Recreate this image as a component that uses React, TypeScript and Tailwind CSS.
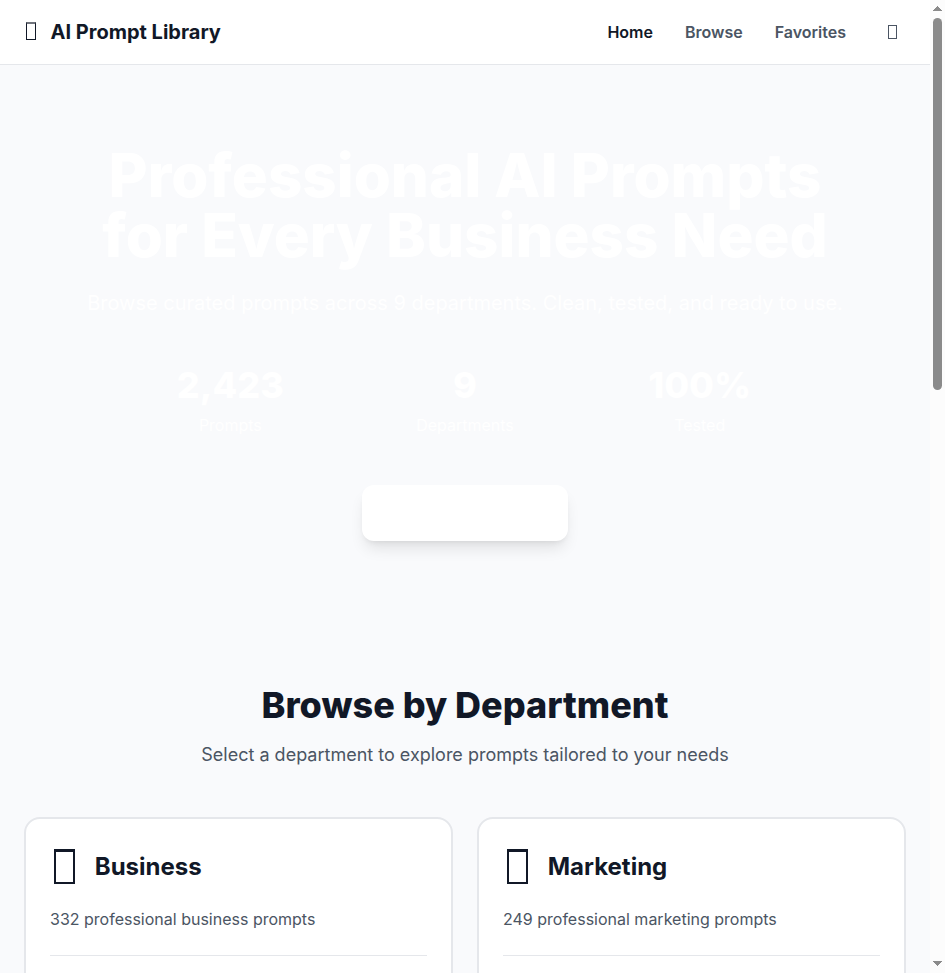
const stats = [
  { value: "2,423", label: "Prompts" },
  { value: "9", label: "Departments" },
  { value: "100%", label: "Tested" },
];

const departments = [
  { name: "Business", text: "332 professional business prompts" },
  { name: "Marketing", text: "249 professional marketing prompts" },
];

function Header() {
  return (
    <header className="flex h-[65px] shrink-0 items-center justify-between border-b border-[#e5e7eb] bg-white px-6">
      <div className="flex items-center gap-3 text-xl font-bold text-[#111827]">
        <span className="flex h-8 w-[14.5px] pt-1.5 pl-0.5">
          <span className="h-[18px] w-[10px] border border-t-2 border-current border-t-[#111827]/60" />
        </span>
        <span>AI Prompt Library</span>
      </div>
      <nav className="flex items-center gap-8 font-semibold text-[#4b5563]">
        <a className="text-[#111827]">Home</a>
        <a>Browse</a>
        <a>Favorites</a>
        <button aria-label="Theme" className="flex h-11 w-7 justify-center pt-[15px]">
          <span className="h-[14px] w-[9px] border border-current" />
        </button>
      </nav>
    </header>
  );
}

function Hero() {
  return (
    <section className="flex shrink-0 flex-col items-center px-6 py-20 text-center text-white">
      <h1 className="mb-6 text-6xl font-extrabold">
        Professional AI Prompts
        <br />
        for Every Business Need
      </h1>
      <p className="mb-12 text-xl text-white">
        Browse curated prompts across 9 departments. Clean, tested, and ready to use.
      </p>
      <div className="mb-12 grid w-full max-w-2xl grid-cols-3 gap-8">
        {stats.map((s) => (
          <div key={s.label}>
            <div className="mb-2 text-4xl font-extrabold">{s.value}</div>
            <div className="text-white">{s.label}</div>
          </div>
        ))}
      </div>
      <button aria-label="Browse" className="h-14 w-[206px] rounded-xl bg-white shadow-lg" />
    </section>
  );
}

function Departments() {
  return (
    <section className="shrink-0 px-6 py-16">
      <div className="mb-12 text-center">
        <h2 className="mb-4 text-4xl font-extrabold text-[#111827]">Browse by Department</h2>
        <p className="text-lg text-[#4b5563]">Select a department to explore prompts tailored to your needs</p>
      </div>
      <div className="grid grid-cols-2 gap-6">
        {departments.map((d) => (
          <article key={d.name} className="h-64 rounded-2xl border-2 border-[#e5e7eb] bg-white p-6">
            <div className="mb-4 flex items-center gap-4 text-[#111827]">
              <span className="flex h-12 w-[28.75px] justify-center pt-1.5">
                <span className="h-[35px] w-[21px] border-2 border-t-3 border-current" />
              </span>
              <h3 className="text-2xl font-bold">{d.name}</h3>
            </div>
            <p className="mb-6 text-[#4b5563]">{d.text}</p>
            <div className="border-t border-[#e5e7eb]" />
          </article>
        ))}
      </div>
    </section>
  );
}

function Scrollbar() {
  return (
    <div className="flex w-[15px] shrink-0 flex-col items-center bg-[#fcfcfc]">
      <svg className="h-[18px] w-[15px] shrink-0" viewBox="0 0 15 18" fill="#8b8b8b" shapeRendering="crispEdges">
        <path d="M7 6h1l4 5H3z" />
      </svg>
      <div className="h-[372px] w-[9px] rounded-full bg-[#8b8b8b]" />
      <svg className="mt-auto h-[18px] w-[15px] shrink-0" viewBox="0 0 15 18" fill="#8b8b8b" shapeRendering="crispEdges">
        <path d="M3 6h9l-4 5H7z" />
      </svg>
    </div>
  );
}

export default function App() {
  return (
    <div className="flex h-screen overflow-hidden bg-[#f9fafc] font-['Inter',sans-serif]">
      <main className="flex min-w-0 flex-1 flex-col overflow-hidden">
        <Header />
        <Hero />
        <Departments />
      </main>
      <Scrollbar />
    </div>
  );
}
